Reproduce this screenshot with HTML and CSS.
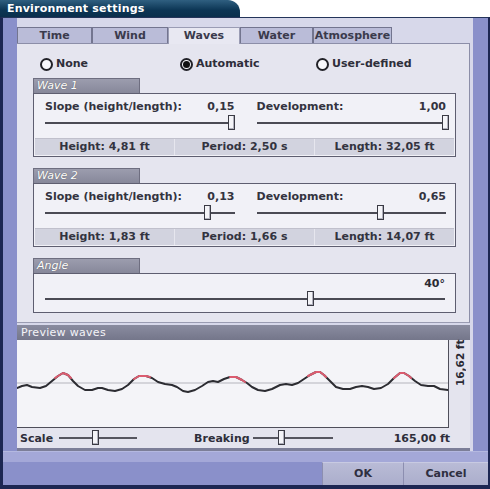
FILE: index.html
```html
<!DOCTYPE html>
<html>
<head>
<meta charset="utf-8">
<link rel="stylesheet" href="styles.css">
</head>
<body>
<div class="window">
  <div class="titlebar">Environment settings</div>
  <div class="frame">
    <div class="main">
      <div class="panel">
        <div class="tabs">
          <div class="tab t-time">Time</div>
          <div class="tab t-wind">Wind</div>
          <div class="tab t-waves active">Waves</div>
          <div class="tab t-water">Water</div>
          <div class="tab t-atmo">Atmosphere</div>
        </div>
        <div class="tabpage">
          <div class="radios">
            <div class="radio r-none"><span class="dot"></span>None</div>
            <div class="radio r-auto"><span class="dot checked"></span>Automatic</div>
            <div class="radio r-user"><span class="dot"></span>User-defined</div>
          </div>

          <div class="group g-wave1">
            <div class="gtab">Wave 1</div>
            <div class="gbox">
              <div class="cols">
                <div class="col col-left">
                  <div class="lrow"><span>Slope (height/length):</span><span>0,15</span></div>
                  <div class="slider"><span class="thumb" style="left:183px"></span></div>
                </div>
                <div class="col col-right">
                  <div class="lrow"><span>Development:</span><span>1,00</span></div>
                  <div class="slider"><span class="thumb" style="left:185px"></span></div>
                </div>
              </div>
              <div class="info">
                <div class="cell">Height: 4,81 ft</div>
                <div class="cell">Period: 2,50 s</div>
                <div class="cell">Length: 32,05 ft</div>
              </div>
            </div>
          </div>

          <div class="group g-wave2">
            <div class="gtab">Wave 2</div>
            <div class="gbox">
              <div class="cols">
                <div class="col col-left">
                  <div class="lrow"><span>Slope (height/length):</span><span>0,13</span></div>
                  <div class="slider"><span class="thumb" style="left:159px"></span></div>
                </div>
                <div class="col col-right">
                  <div class="lrow"><span>Development:</span><span>0,65</span></div>
                  <div class="slider"><span class="thumb" style="left:120px"></span></div>
                </div>
              </div>
              <div class="info">
                <div class="cell">Height: 1,83 ft</div>
                <div class="cell">Period: 1,66 s</div>
                <div class="cell">Length: 14,07 ft</div>
              </div>
            </div>
          </div>

          <div class="group g-angle">
            <div class="gtab">Angle</div>
            <div class="gbox abox">
              <div class="avalue">40°</div>
              <div class="slider aslider"><span class="thumb" style="left:262px"></span></div>
            </div>
          </div>
        </div>

        <div class="preview">
          <div class="phead">Preview waves</div>
          <div class="pchart">
            <div class="chart">
              <svg width="431" height="87" viewBox="17 340 431 87">
                <line x1="17" y1="383" x2="448" y2="383" stroke="#b4b4bc" stroke-width="1"/>
                <polyline fill="none" stroke="#2c2c32" stroke-width="2" stroke-linejoin="round" stroke-linecap="round"
                  points="17,388 22,386 27,385 32,387 40,388 46,386 52,381 58,376 63,373 68,375 73,381 78,386 85,390 92,390 98,388 102,388 108,390 115,391 122,389 128,385 134,379 139,376 146,376 152,378 158,382 165,384 172,385 177,387 183,391 188,392 195,390 202,386 208,382 213,381 218,382 224,379 230,377 236,377 242,380 247,383 252,387 258,390 265,391 272,389 280,385 286,384 292,385 298,383 304,379 310,375 316,372 320,372 324,375 330,381 336,387 343,389 350,389 356,387 362,386 368,387 374,389 381,388 388,384 394,378 400,373 404,373 409,376 415,381 421,385 428,386 434,386 440,389 448,390"/>
                <g fill="none" stroke="#dc5c70" stroke-width="2" stroke-linejoin="round" stroke-linecap="round">
                  <polyline points="55,378 58,376 63,373 68,375 71,378"/>
                  <polyline points="134,379 139,376 146,376 150,377"/>
                  <polyline points="230,377 236,377 242,380 245,382"/>
                  <polyline points="308,376 310,375 316,372 320,372 324,375 326,377"/>
                  <polyline points="394,378 400,373 404,373 409,376 411,378"/>
                </g>
              </svg>
            </div>
            <div class="vlabel">16,62 ft</div>
          </div>
          <div class="prow">
            <span class="plabel">Scale</span>
            <div class="pslider s-scale"><span class="thumb" style="left:33px"></span></div>
            <span class="plabel l-break">Breaking</span>
            <div class="pslider s-break"><span class="thumb" style="left:25px"></span></div>
            <span class="pvalue">165,00 ft</span>
          </div>
        </div>
      </div>
    </div>
    <div class="footer">
      <div class="band"></div>
      <div class="btnrow">
        <div class="btn">OK</div>
        <div class="btn btn-cancel">Cancel</div>
      </div>
    </div>
  </div>
</div>
</body>
</html>
```

FILE: styles.css
```css
* { box-sizing: border-box; }
html, body { margin: 0; padding: 0; }
body {
  width: 490px;
  height: 489px;
  overflow: hidden;
  background: #ffffff;
  font-family: "DejaVu Sans", "Liberation Sans", sans-serif;
  font-size: 11px;
  font-weight: bold;
  color: #3a3a48;
}
.window {
  width: 490px;
  height: 489px;
  display: flex;
  flex-direction: column;
}
.titlebar {
  height: 17px;
  width: 240px;
  flex: none;
  background: linear-gradient(#2f5f80, #0c3554 60%, #0a2f4c);
  border-top-right-radius: 12px;
  color: #ffffff;
  padding-left: 7px;
  line-height: 17px;
  letter-spacing: 0.2px;
}
.frame {
  flex: 1;
  display: flex;
  flex-direction: column;
  background: #8a90ca;
  border-top: 1px solid #24345a;
  border-left: 3px solid #1c2652;
  border-right: 2px solid #1c2652;
  border-bottom: 4px solid #1c2652;
}
.main {
  display: flex;
  padding-left: 14px;
  padding-right: 15px;
}
.panel {
  width: 456px;
  height: 433px;
  background: #d7d8ea;
  padding-top: 9px;
  padding-right: 3px;
  display: flex;
  flex-direction: column;
}
.tabs {
  display: flex;
  height: 16px;
  align-items: flex-end;
}
.tab {
  height: 16px;
  background: #babcd8;
  border: 1px solid #73758f;
  border-bottom: none;
  text-align: center;
  line-height: 15px;
  color: #3a3a4c;
}
.t-time { width: 75px; }
.t-wind { width: 76px; }
.t-waves { width: 72px; }
.t-water { width: 73px; }
.t-atmo { width: 79px; }
.tab.active {
  background: #e8e8f2;
  border-color: #9a9cb4;
  height: 17px;
  margin-bottom: -1px;
  position: relative;
}
.tabpage {
  width: 453px;
  height: 280px;
  background: #e5e5ef;
  border-top: 1px solid #8c8ea8;
  border-right: 1px solid #8c8ea8;
  border-bottom: 1px solid #9a9cb2;
  padding-left: 16px;
  display: flex;
  flex-direction: column;
}
.radios {
  display: flex;
  height: 14px;
  margin-top: 13px;
  align-items: center;
  line-height: 14px;
}
.radio {
  display: flex;
  align-items: center;
  gap: 3px;
  color: #2e2e3a;
}
.r-none { margin-left: 7px; width: 140px; }
.r-auto { width: 136px; }
.dot {
  width: 13px;
  height: 13px;
  border-radius: 50%;
  border: 2px solid #222228;
  background: #f8f8fc;
  display: inline-flex;
  align-items: center;
  justify-content: center;
}
.dot.checked::after {
  content: "";
  width: 7px;
  height: 7px;
  border-radius: 50%;
  background: #111;
}
.group {
  width: 423px;
  display: flex;
  flex-direction: column;
}
.g-wave1 { margin-top: 7px; }
.g-wave2 { margin-top: 11px; }
.g-angle { margin-top: 11px; }
.gtab {
  width: 107px;
  height: 15px;
  background: linear-gradient(#9c9dae, #87889a);
  border: 1px solid #6e6e80;
  border-bottom: none;
  color: #ffffff;
  font-style: italic;
  font-weight: normal;
  line-height: 14px;
  padding-left: 3px;
  text-shadow: 0 0 1px #555;
}
.gbox {
  height: 64px;
  background: #f1f1f7;
  border: 1px solid #5e5e70;
  display: flex;
  flex-direction: column;
}
.cols {
  display: flex;
  height: 44px;
}
.col {
  flex: 1;
  display: flex;
  flex-direction: column;
}
.col-left { padding-left: 11px; padding-right: 10px; }
.col-right { padding-left: 12px; padding-right: 9px; }
.lrow {
  margin-top: 6px;
  height: 13px;
  line-height: 13px;
  display: flex;
  justify-content: space-between;
  color: #33333f;
}
.slider {
  position: relative;
  height: 16px;
  margin-top: 2px;
}
.slider::before {
  content: "";
  position: absolute;
  left: 0;
  right: 0;
  top: 7px;
  height: 2px;
  background: #4a4a54;
}
.thumb {
  position: absolute;
  top: 0;
  width: 7px;
  height: 15px;
  background: #f4f4f8;
  border: 1px solid #3a3a44;
  box-shadow: inset -1px -1px 0 #b0b0bc;
}
.info {
  height: 17px;
  margin: 0 1px;
  background: #d2d3df;
  display: flex;
  border-top: 1px solid #c0c0cc;
}
.cell {
  flex: 1;
  text-align: center;
  line-height: 16px;
  border-left: 1px solid #e6e6ee;
  color: #33333f;
}
.cell:first-child { border-left: none; }
.abox {
  height: 40px;
  padding: 0 10px 0 11px;
}
.avalue {
  margin-top: 3px;
  height: 13px;
  line-height: 13px;
  text-align: right;
  color: #2a2a34;
}
.aslider { margin-top: 1px; }
.preview {
  width: 453px;
  margin-top: 2px;
  flex: 1;
  background: #e4e4ee;
  border-bottom: 3px solid #7c7e98;
  display: flex;
  flex-direction: column;
}
.phead {
  height: 15px;
  background: linear-gradient(#8a8ca0, #74768a);
  color: #f4f4f8;
  font-weight: normal;
  line-height: 15px;
  padding-left: 4px;
  letter-spacing: 0.3px;
}
.pchart {
  display: flex;
  height: 88px;
}
.chart {
  width: 432px;
  height: 88px;
  background: #f4f4f8;
  border-right: 1px solid #4e4e5a;
  border-bottom: 1px solid #4e4e5a;
}
.chart svg { display: block; }
.vlabel {
  flex: 1;
  writing-mode: vertical-rl;
  transform: rotate(180deg);
  text-align: right;
  padding-top: 4px;
  padding-right: 4px;
  font-size: 10.5px;
  line-height: 14px;
  color: #2a2a34;
}
.prow {
  display: flex;
  align-items: center;
  height: 20px;
  padding-left: 3px;
}
.plabel { color: #2e2e3a; }
.pslider {
  position: relative;
  height: 16px;
}
.pslider::before {
  content: "";
  position: absolute;
  left: 0;
  right: 0;
  top: 7px;
  height: 2px;
  background: #55555f;
}
.s-scale { width: 78px; margin-left: 6px; }
.l-break { margin-left: 57px; }
.s-break { width: 80px; margin-left: 3px; }
.pvalue { margin-left: auto; margin-right: 20px; color: #2e2e3a; }
.footer {
  flex: 1;
  display: flex;
  flex-direction: column;
}
.band {
  height: 11px;
  background: #a4a8d8;
  border-top: 1px solid #b4b8e0;
}
.btnrow {
  flex: 1;
  display: flex;
  justify-content: flex-end;
}
.btn {
  width: 81px;
  background: linear-gradient(#b9bbd6, #abaecc);
  border-left: 1px solid #8c8eb0;
  border-top: 1px solid #c8cae2;
  text-align: center;
  line-height: 22px;
  color: #2e2e40;
}
.btn-cancel { width: 85px; }
```
